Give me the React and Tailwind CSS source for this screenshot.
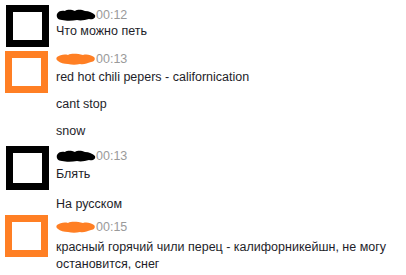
import React from "react";

function Avatar({ color, className = "" }) {
  return (
    <div
      className={`shrink-0 w-[43px] h-[42px] border-[7px] bg-white ${className}`}
      style={{ borderColor: color }}
    />
  );
}

function BlobBlack() {
  return (
    <svg width="40" height="12" viewBox="0 0 40 12" className="shrink-0">
      <path
        d="M1 5 C2 2 6 1 9 2 C12 0 16 1 19 2 C22 0 26 1 29 2 C33 2 37 4 39 6 C40 9 37 11 33 10 C29 11 25 12 21 11 C16 12 10 12 6 11 C2 11 0 8 1 5 Z"
        fill="#000"
      />
    </svg>
  );
}

function BlobOrange({ w = 40 }) {
  return (
    <svg width={w} height="13" viewBox="0 0 40 13" className="shrink-0">
      <path
        d="M1 4 C4 2 8 1 12 2 C16 0 22 1 27 2 C31 1 35 2 38 4 C40 6 38 9 35 9 C31 10 28 12 24 11 C20 12 16 12 12 11 C8 11 4 10 2 8 C0 7 0 5 1 4 Z"
        fill="#ff7f24"
      />
    </svg>
  );
}

function Header({ blob, time }) {
  return (
    <div className="flex items-center h-[14px] leading-[14px]">
      {blob}
      <span className="text-[#9a9a9a]">{time}</span>
    </div>
  );
}

export default function App() {
  return (
    <div
      className="w-[406px] h-[275px] bg-white overflow-hidden text-[12.5px] text-[#1e1e2a] pl-[5px]"
      style={{ fontFamily: '"Liberation Sans", Arial, sans-serif' }}
    >
      {/* Message 1 */}
      <div className="flex items-start pt-[5px]">
        <Avatar color="#000" className="ml-[1px]" />
        <div className="ml-[7px] pt-[3px]">
          <Header blob={<BlobBlack />} time="00:12" />
          <p className="leading-[17px] mt-[1px]">Что можно петь</p>
        </div>
      </div>

      {/* Message 2 */}
      <div className="flex items-start mt-[4px]">
        <Avatar color="#ff7f24" />
        <div className="ml-[8px] pt-[1px]">
          <Header blob={<BlobOrange />} time="00:13" />
          <p className="leading-[17px] mt-[3px]">red hot chili pepers - californication</p>
          <p className="leading-[17px] mt-[10px]">cant stop</p>
          <p className="leading-[17px] mt-[10px]">snow</p>
        </div>
      </div>

      {/* Message 3 */}
      <div className="flex items-start mt-[6px]">
        <Avatar color="#000" className="ml-[1px] h-[44px]" />
        <div className="ml-[7px] pt-[3px]">
          <Header blob={<BlobBlack />} time="00:13" />
          <p className="leading-[17px] mt-[3px]">Блять</p>
          <p className="leading-[17px] mt-[13px]">На русском</p>
        </div>
      </div>

      {/* Message 4 */}
      <div className="flex items-start mt-[2px]">
        <Avatar color="#ff7f24" />
        <div className="ml-[8px] pt-[5px] w-[350px]">
          <Header blob={<BlobOrange />} time="00:15" />
          <p className="leading-[17px] mt-[5px]">
            красный горячий чили перец - калифорникейшн, не могу остановится, снег
          </p>
        </div>
      </div>
    </div>
  );
}
